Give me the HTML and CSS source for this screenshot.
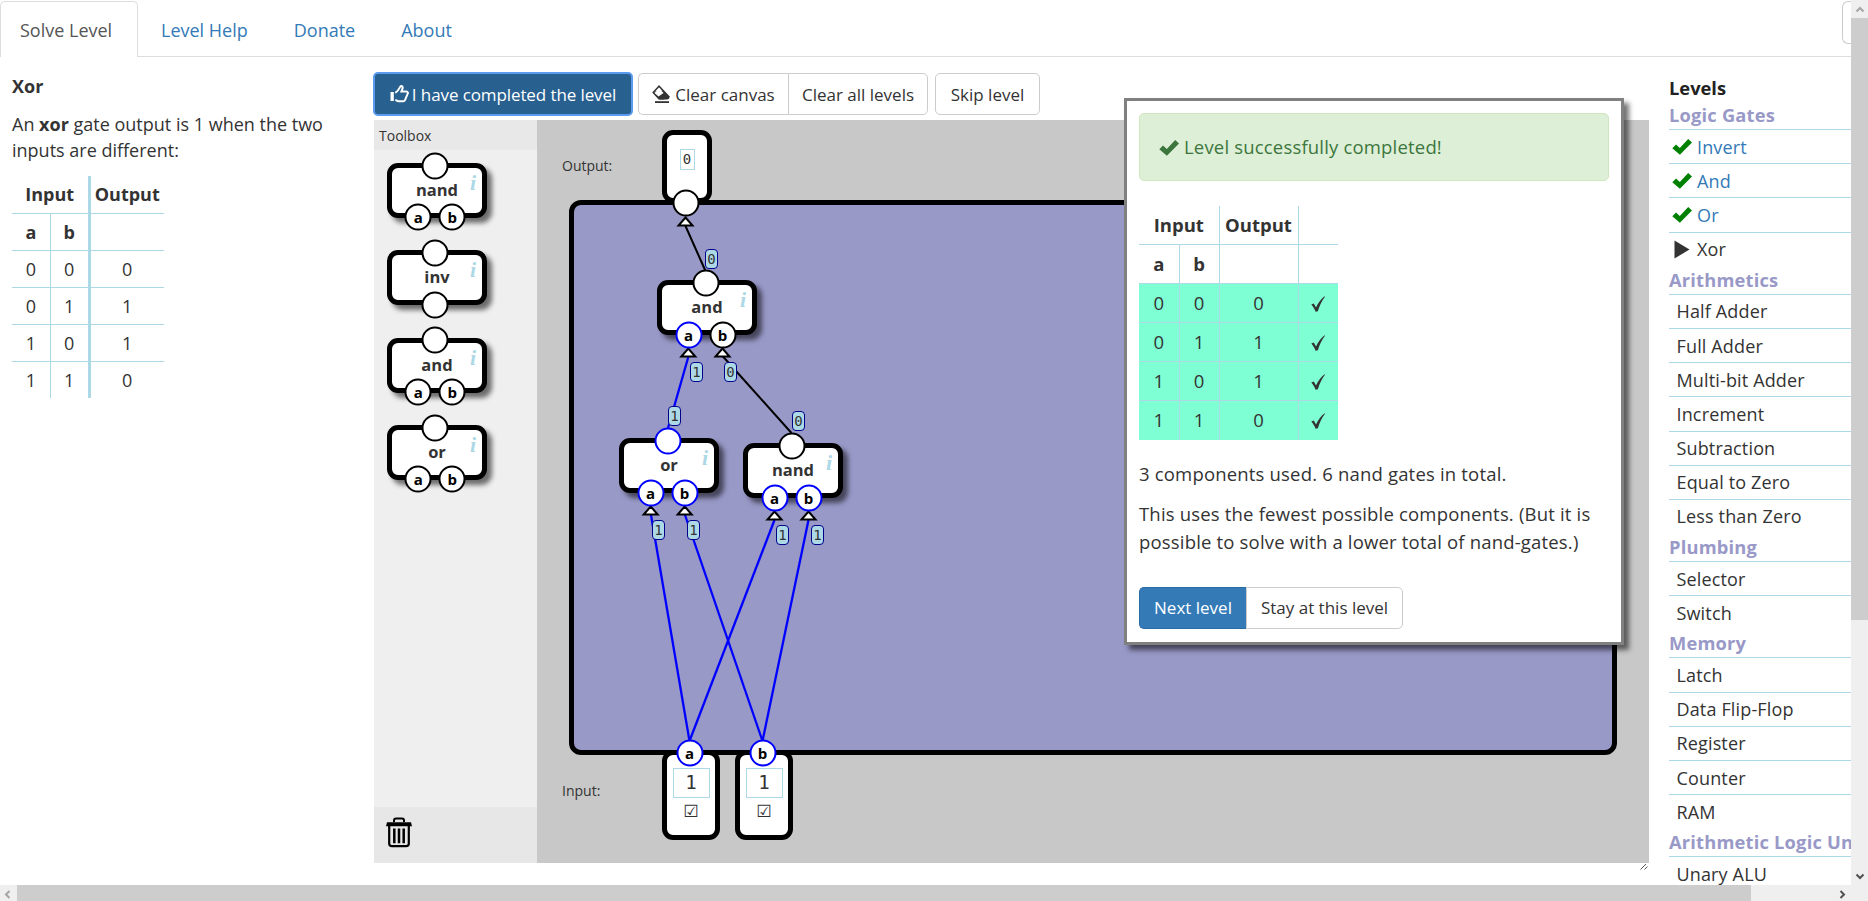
FILE: index.html
```html
<!DOCTYPE html>
<html lang="en">
<head>
<meta charset="utf-8">
<title>Xor</title>
<link rel="stylesheet" href="styles.css">
</head>
<body>
<svg class="defs" width="0" height="0">
  <symbol id="check" viewBox="0 0 20 17"><path d="M0.3 10.2 4 6.4l3.8 3.7L16.2 1 20 4.4 7.9 16.8z" fill="currentColor"/></symbol>
  <symbol id="tick" viewBox="0 0 14 16"><path d="M0.3 8.6 2.8 7.4 5 11.6C7 7 10 2.8 13.6 0.2L14 0.8C11 4.6 8.600 9.600 6.900 15.200L4.600 15.800C3.400 12.800 2 10.400 0.300 8.600z" fill="currentColor"/></symbol>
</svg>
<div class="window">
  <div class="page">
    <nav class="tabs">
      <a class="tab active">Solve Level</a>
      <a class="tab">Level Help</a>
      <a class="tab">Donate</a>
      <a class="tab">About</a>
      <span class="nav-box"></span>
    </nav>
    <div class="main">
      <section class="task">
        <h1>Xor</h1>
        <p>An <b>xor</b> gate output is 1 when the two<br>inputs are different:</p>
        <table class="truth spec">
          <tr><th colspan="2">Input</th><th>Output</th></tr>
          <tr><th>a</th><th>b</th><th></th></tr>
          <tr><td>0</td><td>0</td><td>0</td></tr>
          <tr><td>0</td><td>1</td><td>1</td></tr>
          <tr><td>1</td><td>0</td><td>1</td></tr>
          <tr><td>1</td><td>1</td><td>0</td></tr>
        </table>
      </section>

      <section class="work">
        <div class="buttons">
          <button class="btn done"><svg width="19" height="18" viewBox="0 0 19 18"><path d="M0.500 7H3.800V16H0.500z" fill="#fff"/><path d="M5.300 7.800C8 6.500 8.800 4.500 10.300 1.600 11.200 0.600 12.900 1.200 12.700 3L11.400 6.600H16.500C17.800 6.700 18.300 7.900 17.600 8.900L15 15C14.700 15.800 14 16.200 13.200 16.200H8.500C7.200 16.200 6.600 15.200 5.300 14.900" fill="none" stroke="#fff" stroke-width="2"/></svg><span>I have completed the level</span></button>
          <div class="group">
            <button class="btn canvas-btn"><svg width="18" height="19" viewBox="0 0 18 19"><path d="M7 1.200 1.200 7.500 7 13.800H11.600L16.800 11.500z" fill="#fff" stroke="#333" stroke-width="1.500"/><path d="M4 6 11 5.500 17.500 12C17.500 13.500 16.500 14.500 15 14.500H7.500L1.500 8z" fill="#333"/><path d="M2.500 8 7.200 3.200 11.500 8 6.500 11.500z" fill="#fff"/><path d="M3 16.200H17V18H3z" fill="#333"/></svg><span>Clear canvas</span></button><button class="btn">Clear all levels</button>
          </div>
          <button class="btn skip">Skip level</button>
        </div>

        <div class="bench">
          <aside class="toolbox">
            <header>Toolbox</header>
            <div class="tools">
              <div class="gate"><i>i</i><b>nand</b><s class="port out"></s><s class="port in-a">a</s><s class="port in-b">b</s></div>
              <div class="gate"><i>i</i><b>inv</b><s class="port out"></s><s class="port in-mid"></s></div>
              <div class="gate"><i>i</i><b>and</b><s class="port out"></s><s class="port in-a">a</s><s class="port in-b">b</s></div>
              <div class="gate"><i>i</i><b>or</b><s class="port out"></s><s class="port in-a">a</s><s class="port in-b">b</s></div>
            </div>
            <footer><svg width="26" height="31" viewBox="0 0 26 31"><path d="M8 5V3.500Q8 1.500 10 1.500H16Q18 1.500 18 3.500V5" fill="none" stroke="#000" stroke-width="2"/><path d="M1 5.200H25L26 9.300H0z" fill="#000"/><path d="M3.200 8V26.500Q3.200 29.200 6 29.200H20Q22.800 29.200 22.800 26.500V8" fill="none" stroke="#000" stroke-width="2.200"/><path d="M8.300 11.500V26.300M13 11.500V26.300M17.700 11.500V26.300" stroke="#000" stroke-width="2.500"/></svg></footer>
          </aside>

          <div class="canvas">
            <div class="board"></div>
            <span class="caption cap-out">Output:</span>
            <span class="caption cap-in">Input:</span>
            <div class="pin pin-out"><span class="bit">0</span></div>
            <div class="pin pin-in pin-a"><span class="bit">1</span><span class="box">☑</span></div>
            <div class="pin pin-in pin-b"><span class="bit">1</span><span class="box">☑</span></div>
            <div class="gate node-and"><i>i</i><b>and</b></div>
            <div class="gate node-or"><i>i</i><b>or</b></div>
            <div class="gate node-nand"><i>i</i><b>nand</b></div>
            <svg class="wires" width="1112" height="743" viewBox="537 120 1112 743">
              <g stroke="#000" stroke-width="2"><path d="M685.500 226 705.500 271"/><path d="M722.500 356 791.500 433"/></g>
              <g stroke="#00f" stroke-width="2.300" fill="none">
                <path d="M688.300 357 668 428"/><path d="M651 515 689.500 741"/><path d="M685 515 762.500 741"/><path d="M774.500 520 689.500 741"/><path d="M808.500 520 762.500 741"/>
              </g>
              <g fill="#fff" stroke="#000" stroke-width="2">
                <path d="M685.500 217.500 692.500 225.500H678.500z"/><path d="M688.300 348.500 695.300 356.500H681.300z"/><path d="M722.500 348.500 729.500 356.500H715.500z"/>
                <path d="M650.700 506.500 657.700 514.500H643.700z"/><path d="M684.700 506.500 691.700 514.500H677.700z"/><path d="M774.500 511.500 781.500 519.500H767.500z"/><path d="M808.500 511.500 815.500 519.500H801.500z"/>
              </g>
            </svg>
            <s class="port p1"></s><s class="port p2"></s><s class="port on p3">a</s><s class="port p4">b</s>
            <s class="port on p5"></s><s class="port on p6">a</s><s class="port on p7">b</s>
            <s class="port p8"></s><s class="port on p9">a</s><s class="port on p10">b</s>
            <s class="port on p11">a</s><s class="port on p12">b</s>
            <span class="val v1">0</span><span class="val v2">1</span><span class="val v3">0</span><span class="val v4">1</span><span class="val v5">0</span>
            <span class="val v6">1</span><span class="val v7">1</span><span class="val v8">1</span><span class="val v9">1</span>
          </div>
        </div>
        <svg class="grip" width="8" height="7" viewBox="0 0 8 7"><path d="M0.500 6.500 6 1M4.500 6.500 7.500 3.500" stroke="#555"/></svg>

        <div class="dialog">
          <div class="alert"><svg width="20" height="17"><use href="#check"/></svg><span>Level successfully completed!</span></div>
          <table class="truth result">
            <colgroup><col class="c-in"><col class="c-in"><col class="c-out"><col class="c-ok"></colgroup>
            <tr><th colspan="2">Input</th><th>Output</th><th></th></tr>
            <tr><th>a</th><th>b</th><th></th><th></th></tr>
            <tr class="ok"><td>0</td><td>0</td><td>0</td><td><svg width="14" height="16"><use href="#tick"/></svg></td></tr>
            <tr class="ok"><td>0</td><td>1</td><td>1</td><td><svg width="14" height="16"><use href="#tick"/></svg></td></tr>
            <tr class="ok"><td>1</td><td>0</td><td>1</td><td><svg width="14" height="16"><use href="#tick"/></svg></td></tr>
            <tr class="ok"><td>1</td><td>1</td><td>0</td><td><svg width="14" height="16"><use href="#tick"/></svg></td></tr>
          </table>
          <p>3 components used. 6 nand gates in total.</p>
          <p>This uses the fewest possible components. (But it is<br>possible to solve with a lower total of nand-gates.)</p>
          <div class="group"><button class="btn primary">Next level</button><button class="btn stay">Stay at this level</button></div>
        </div>
      </section>

      <aside class="levels">
        <h2>Levels</h2>
        <h3>Logic Gates</h3>
        <ul>
          <li class="passed"><svg width="20" height="17"><use href="#check"/></svg><a>Invert</a></li>
          <li class="passed"><svg width="20" height="17"><use href="#check"/></svg><a>And</a></li>
          <li class="passed"><svg width="20" height="17"><use href="#check"/></svg><a>Or</a></li>
          <li class="current"><svg width="20" height="19" viewBox="0 0 20 19"><path d="M2.500 0.500 17.500 9.500 2.500 18.500z" fill="#333"/></svg><span>Xor</span></li>
        </ul>
        <h3>Arithmetics</h3>
        <ul><li>Half Adder</li><li>Full Adder</li><li>Multi-bit Adder</li><li>Increment</li><li>Subtraction</li><li>Equal to Zero</li><li>Less than Zero</li></ul>
        <h3>Plumbing</h3>
        <ul><li>Selector</li><li>Switch</li></ul>
        <h3>Memory</h3>
        <ul><li>Latch</li><li>Data Flip-Flop</li><li>Register</li><li>Counter</li><li>RAM</li></ul>
        <h3>Arithmetic Logic Unit</h3>
        <ul><li>Unary ALU</li></ul>
      </aside>
    </div>
  </div>
  <div class="vbar">
    <svg width="17" height="18" viewBox="0 0 17 18"><path d="M5.500 11.500 9 8 12.500 11.500" fill="none" stroke="#a5a5a5" stroke-width="2"/></svg>
    <div class="vthumb"></div>
    <svg width="17" height="17" viewBox="0 0 17 17"><path d="M5.500 6.500 9 10 12.500 6.500" fill="none" stroke="#505050" stroke-width="2"/></svg>
  </div>
  <div class="hbar">
    <svg width="17" height="16" viewBox="0 0 17 16"><path d="M9.500 6 6 9.500 9.500 13" fill="none" stroke="#a5a5a5" stroke-width="2"/></svg>
    <div class="hthumb"></div>
    <svg width="17" height="16" viewBox="0 0 17 16"><path d="M6.500 6 10 9.500 6.500 13" fill="none" stroke="#505050" stroke-width="2"/></svg>
  </div>
  <div class="corner"></div>
</div>
</body>
</html>
```
FILE: styles.css
```css
* { box-sizing: border-box; }
body { margin: 0; font-family: "Open Sans", "Noto Sans", sans-serif; font-size: 18px; color: #333; background: #fff; overflow: hidden; }
h1, h2, h3, p, ul { margin: 0; padding: 0; }
.defs { position: absolute; }
.window { display: grid; grid-template: 885px 16px / 1851px 17px; width: 1868px; height: 901px; overflow: hidden; }
.page { display: flex; flex-direction: column; overflow: hidden; white-space: nowrap; }

.tabs { display: flex; flex: none; height: 57px; padding-top: 1px; border-bottom: 1px solid #ddd; }
.tab { height: 56px; line-height: 56px; padding: 0 22px 0 20px; margin-right: 2px; border: 1px solid transparent; border-bottom: 0; color: #337ab7; }
.tab.active { background: #fff; border-color: #ddd; border-radius: 5px 5px 0 0; color: #555; width: 138px; padding-left: 19px; }
.nav-box { margin-left: auto; width: 9px; height: 43px; border: 1px solid #ccc; border-right: 0; border-radius: 6px 0 0 6px; }

.main { display: flex; flex: 1; min-height: 0; }
.task { width: 374px; flex: none; padding: 16px 0 0 12px; line-height: 26px; }
.task h1 { font-size: 18px; line-height: 26px; font-weight: 700; margin-bottom: 12px; }
.task p { margin-bottom: 13px; }
b { font-weight: 700; }

.truth { border-collapse: collapse; table-layout: fixed; text-align: center; }
.truth th, .truth td { padding: 0; border: 1px solid lightblue; }
.truth tr:first-child > * { border-top: 0; }
.truth tr:last-child > * { border-bottom: 0; }
.truth tr > :first-child { border-left: 0; }
.truth tr > :last-child { border-right: 0; }
.spec td, .spec th { height: 37px; min-width: 38px; }
.spec tr > :last-child { border-left-width: 3px; width: 75px; }
.spec { width: 152px; line-height: 24px; }

.work { position: relative; width: 1275px; flex: none; padding-top: 15px; display: flex; flex-direction: column; }
.buttons { display: flex; align-items: center; height: 44px; margin-left: -1px; gap: 5px; font-size: 17px; }
.btn { font: inherit; font-size: 17px; height: 42px; color: #333; background: #fff; border: 1px solid #ccc; border-radius: 5px; padding: 0; display: flex; align-items: center; justify-content: center; width: 140px; white-space: nowrap; }
.done { width: 260px; height: 44px; background: #286090; color: #fff; border: 2px solid #5b9bef; gap: 3px; letter-spacing: -.1px; }
.group { display: flex; }
.group .btn:first-child { width: 150px; border-radius: 5px 0 0 5px; border-right: 0; gap: 5px; }
.group .btn:last-child { border-radius: 0 5px 5px 0; }
.skip { width: 105px; margin-left: 2px; }

.bench { display: flex; height: 743px; margin-top: 4px; }
.toolbox { width: 163px; background: #efefef; display: flex; flex-direction: column; }
.toolbox header { height: 30px; line-height: 31px; padding-left: 5px; font-size: 14px; background: #e8e8e8; }
.tools { flex: 1; padding: 13px 0 0 13px; display: flex; flex-direction: column; gap: 32.400px; }
.toolbox footer { height: 56px; padding: 10px 12px; background: #e7e7e7; }

.gate { position: relative; width: 100px; height: 55px; flex: none; border: 5px solid #000; border-radius: 11px; background: #fff; box-shadow: 5px 5px 5px rgba(0,0,0,.55); text-align: center; line-height: 43px; font-size: 16.500px; }
.gate i { position: absolute; right: 6px; top: -2px; color: lightblue; font: italic bold 22px/34px "Liberation Serif", serif; }
.port { position: absolute; width: 27px; height: 27px; border: 2px solid #000; border-radius: 50%; background: #fff; color: #000; text-decoration: none; font-weight: 700; font-size: 15px; line-height: 22px; text-align: center; transform: translate(-50%, -50%); }
.gate .port { top: 49.300px; }
.gate .out { left: 43.300px; top: -2.500px; }
.gate .in-a { left: 26.300px; }
.gate .in-b { left: 60.300px; }
.gate .in-mid { left: 43.300px; }
.port.on { border-color: #00f; }

.canvas { position: relative; width: 1112px; background: #c8c8c8; overflow: hidden; }
.canvas > * { position: absolute; }
.board { left: 32px; top: 80px; width: 1048px; height: 555px; border: 5px solid #000; border-radius: 12px; background: #9999c8; }
.caption { font-size: 14px; line-height: 20px; }
.cap-out { left: 25px; top: 36px; }
.cap-in { left: 25px; top: 661px; }
.pin { border: 5px solid #000; border-radius: 11px; background: #fff; display: flex; flex-direction: column; align-items: center; }
.pin-out { left: 125px; top: 10px; width: 50px; height: 73px; padding-top: 14px; }
.bit { border: 1px solid lightblue; font-family: "DejaVu Sans Mono", monospace; text-align: center; }
.pin-out .bit { width: 15px; height: 21px; font-size: 14px; line-height: 19px; display: flex; justify-content: center; }
.pin-in { top: 630px; width: 58px; height: 90px; padding-top: 13px; }
.pin-in .bit { width: 37px; height: 30px; font-size: 19px; line-height: 27px; }
.pin-in .box { font: bold 17px/26px "DejaVu Sans", sans-serif; }
.pin-a { left: 125px; }
.pin-b { left: 198px; }
.node-and { left: 120px; top: 160px; }
.node-or { left: 82px; top: 318px; }
.node-nand { left: 206px; top: 323px; }
.wires { left: 0; top: 0; }
.p1 { left: 148.500px; top: 82.500px; }
.p2 { left: 168.500px; top: 162.500px; }
.p3 { left: 151.500px; top: 214.500px; }
.p4 { left: 185.500px; top: 214.500px; }
.p5 { left: 130.500px; top: 320.500px; }
.p6 { left: 113.500px; top: 372.500px; }
.p7 { left: 147.500px; top: 372.500px; }
.p8 { left: 254.500px; top: 325.500px; }
.p9 { left: 237.500px; top: 377.500px; }
.p10 { left: 271.500px; top: 377.500px; }
.p11 { left: 152.500px; top: 632.500px; }
.p12 { left: 225.500px; top: 632.500px; }
.val { width: 13px; height: 20px; border: 1px solid #00008b; border-radius: 4px; background: lightblue; font: 14px/18px "DejaVu Sans Mono", monospace; text-align: center; display: flex; justify-content: center; }
.v1 { left: 168px; top: 129px; }
.v2 { left: 153px; top: 242px; }
.v3 { left: 187px; top: 242px; }
.v4 { left: 131px; top: 286px; }
.v5 { left: 255px; top: 291px; }
.v6 { left: 115px; top: 400px; }
.v7 { left: 150px; top: 400px; }
.v8 { left: 239px; top: 405px; }
.v9 { left: 274px; top: 405px; }
.grip { margin-left: auto; margin-right: 1px; }

.dialog { position: absolute; left: 750px; top: 41px; width: 500px; height: 547px; padding: 12px; border: 3px solid gray; background: #fff; box-shadow: 5px 5px 5px rgba(0,0,0,.55); font-size: 18.500px; line-height: 28px; }
.alert { height: 68px; border: 1px solid #d0e6be; border-radius: 5px; background: #deefd7; color: #3c763d; display: flex; align-items: center; gap: 5px; padding-left: 19px; margin-bottom: 25px; letter-spacing: .18px; }
.result { width: 199px; margin-bottom: 20px; }
.result td, .result th { height: 39px; }
.result tr:first-child th { height: 38.500px; }
.c-in { width: 40px; }
.c-out { width: 79px; }
.c-ok { width: 40px; }
.result svg { vertical-align: -2px; }
.ok { background: aquamarine; }
.dialog p { margin-bottom: 12px; letter-spacing: .18px; }
.dialog .group { margin-top: 31px; }
.dialog .group .primary { width: 107px; background: #337ab7; border-color: #2e6da4; color: #fff; }
.dialog .btn { line-height: 26px; }
.stay { width: 157px; }

.levels { width: 202px; padding: 18px 0 0 20px; overflow: hidden; }
.levels h2 { font-size: 18.300px; line-height: 26px; color: #222; }
.levels h3 { font-size: 18.300px; line-height: 28px; height: 28px; color: #9999c8; letter-spacing: .2px; }
.levels ul { list-style: none; }
.levels li { height: 34.200px; line-height: 34px; border-top: 1px solid lightblue; padding-left: 7.500px; display: flex; align-items: center; letter-spacing: .15px; }
.levels .passed, .levels .current { padding-left: 3px; gap: 5px; }
.passed svg { color: green; }
.passed a { color: #337ab7; }

.vbar { background: #efefef; display: flex; flex-direction: column; }
.vthumb { height: 602px; background: #cdcdcd; margin-bottom: auto; }
.hbar { background: #efefef; display: flex; }
.hthumb { width: 1734px; background: #cdcdcd; margin-right: auto; }
.corner { background: #efefef; }
```
